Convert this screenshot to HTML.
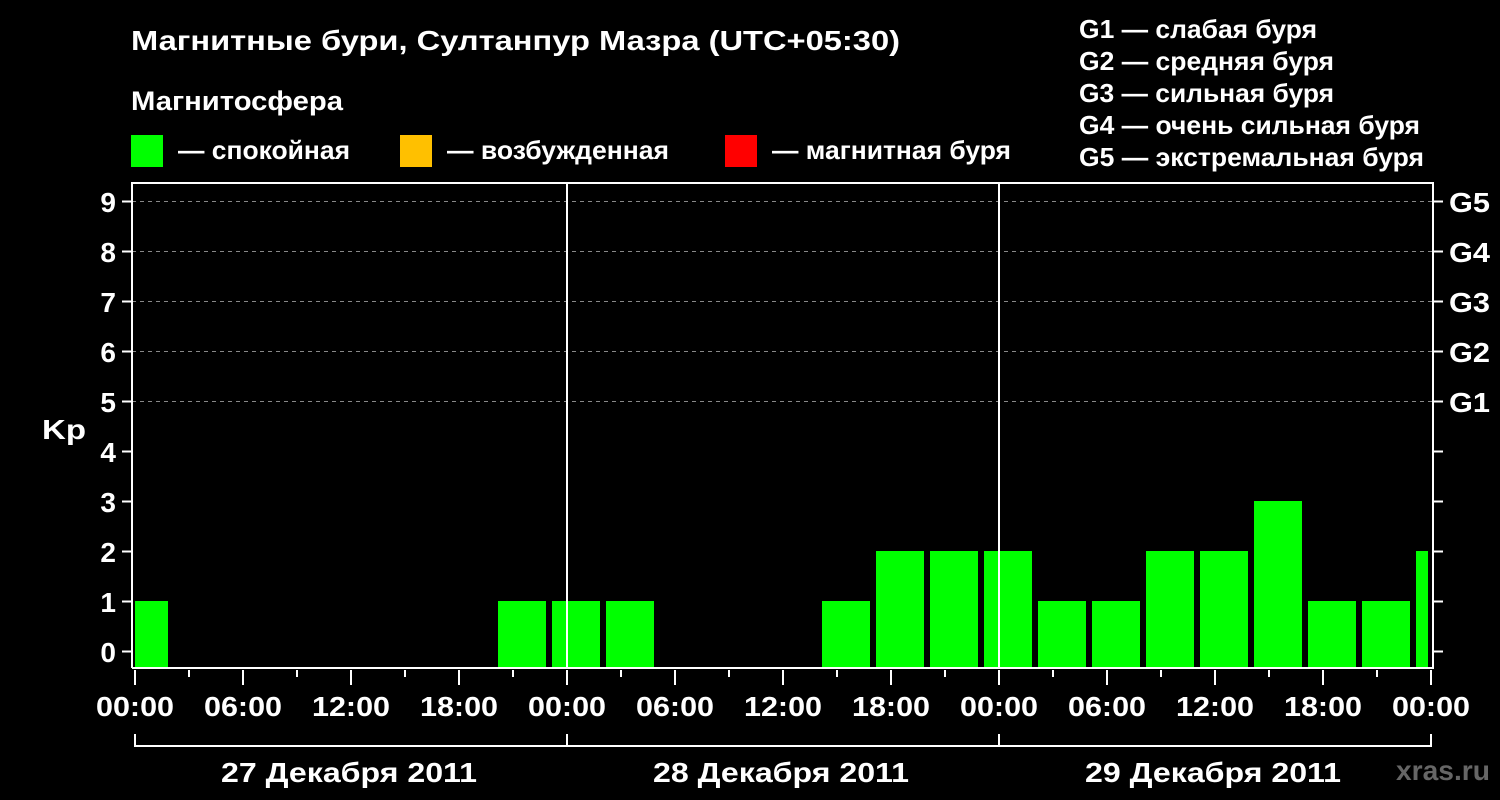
<!DOCTYPE html>
<html><head><meta charset="utf-8"><style>
html,body{margin:0;padding:0;background:#000;}
svg{display:block;font-family:"Liberation Sans",sans-serif;font-weight:bold;}
</style></head><body>
<svg width="1500" height="800" viewBox="0 0 1500 800" xmlns="http://www.w3.org/2000/svg">
<rect width="1500" height="800" fill="#000"/>
<g fill="#fff" lengthAdjust="spacingAndGlyphs">
<text x="131" y="50" font-size="28" textLength="769" lengthAdjust="spacingAndGlyphs">Магнитные бури, Султанпур Мазра (UTC+05:30)</text>
<text x="131" y="110" font-size="27" textLength="212" lengthAdjust="spacingAndGlyphs">Магнитосфера</text>
<text x="178" y="159" font-size="26" textLength="172" lengthAdjust="spacingAndGlyphs">— спокойная</text>
<text x="447" y="159" font-size="26" textLength="222" lengthAdjust="spacingAndGlyphs">— возбужденная</text>
<text x="772" y="159" font-size="26" textLength="239" lengthAdjust="spacingAndGlyphs">— магнитная буря</text>
<text x="1079" y="38" font-size="26" textLength="238" lengthAdjust="spacingAndGlyphs">G1 — слабая буря</text>
<text x="1079" y="70" font-size="26" textLength="255" lengthAdjust="spacingAndGlyphs">G2 — средняя буря</text>
<text x="1079" y="102" font-size="26" textLength="255" lengthAdjust="spacingAndGlyphs">G3 — сильная буря</text>
<text x="1079" y="134" font-size="26" textLength="341" lengthAdjust="spacingAndGlyphs">G4 — очень сильная буря</text>
<text x="1079" y="166" font-size="26" textLength="345" lengthAdjust="spacingAndGlyphs">G5 — экстремальная буря</text>
</g>
<rect x="131" y="135" width="32" height="32" fill="#00ff00"/>
<rect x="400" y="135" width="32" height="32" fill="#ffc000"/>
<rect x="725" y="135" width="32" height="32" fill="#ff0000"/>
<g stroke="#888" stroke-width="1" stroke-dasharray="4,4">
<line x1="132" y1="201.5" x2="1433" y2="201.5"/>
<line x1="132" y1="251.5" x2="1433" y2="251.5"/>
<line x1="132" y1="301.5" x2="1433" y2="301.5"/>
<line x1="132" y1="351.5" x2="1433" y2="351.5"/>
<line x1="132" y1="401.5" x2="1433" y2="401.5"/>
</g>
<g fill="#00ff00">
<rect x="135" y="601" width="33" height="67"/>
<rect x="498" y="601" width="48" height="67"/>
<rect x="552" y="601" width="48" height="67"/>
<rect x="606" y="601" width="48" height="67"/>
<rect x="822" y="601" width="48" height="67"/>
<rect x="876" y="551" width="48" height="117"/>
<rect x="930" y="551" width="48" height="117"/>
<rect x="984" y="551" width="48" height="117"/>
<rect x="1038" y="601" width="48" height="67"/>
<rect x="1092" y="601" width="48" height="67"/>
<rect x="1146" y="551" width="48" height="117"/>
<rect x="1200" y="551" width="48" height="117"/>
<rect x="1254" y="501" width="48" height="167"/>
<rect x="1308" y="601" width="48" height="67"/>
<rect x="1362" y="601" width="48" height="67"/>
<rect x="1416" y="551" width="12" height="117"/>
</g>
<g stroke="#fff" stroke-width="2" fill="none">
<polyline points="132,668 132,183 1433,183 1433,668 132,668"/>
<line x1="567" y1="183" x2="567" y2="668"/>
<line x1="999" y1="183" x2="999" y2="668"/>
<polyline points="135,734 135,746 1431,746 1431,734"/>
<line x1="567" y1="734" x2="567" y2="746"/>
<line x1="999" y1="734" x2="999" y2="746"/>
</g>
<g stroke="#fff" stroke-width="2">
<line x1="122" y1="201.5" x2="132" y2="201.5"/><line x1="1433" y1="201.5" x2="1443" y2="201.5"/>
<line x1="122" y1="251.5" x2="132" y2="251.5"/><line x1="1433" y1="251.5" x2="1443" y2="251.5"/>
<line x1="122" y1="301.5" x2="132" y2="301.5"/><line x1="1433" y1="301.5" x2="1443" y2="301.5"/>
<line x1="122" y1="351.5" x2="132" y2="351.5"/><line x1="1433" y1="351.5" x2="1443" y2="351.5"/>
<line x1="122" y1="401.5" x2="132" y2="401.5"/><line x1="1433" y1="401.5" x2="1443" y2="401.5"/>
<line x1="122" y1="451.5" x2="132" y2="451.5"/><line x1="1433" y1="451.5" x2="1443" y2="451.5"/>
<line x1="122" y1="501.5" x2="132" y2="501.5"/><line x1="1433" y1="501.5" x2="1443" y2="501.5"/>
<line x1="122" y1="551.5" x2="132" y2="551.5"/><line x1="1433" y1="551.5" x2="1443" y2="551.5"/>
<line x1="122" y1="601.5" x2="132" y2="601.5"/><line x1="1433" y1="601.5" x2="1443" y2="601.5"/>
<line x1="122" y1="651.5" x2="132" y2="651.5"/><line x1="1433" y1="651.5" x2="1443" y2="651.5"/>
</g>
<g stroke="#fff" stroke-width="2">
<line x1="135" y1="670" x2="135" y2="685"/><line x1="189" y1="670" x2="189" y2="677"/>
<line x1="243" y1="670" x2="243" y2="685"/><line x1="297" y1="670" x2="297" y2="677"/>
<line x1="351" y1="670" x2="351" y2="685"/><line x1="405" y1="670" x2="405" y2="677"/>
<line x1="459" y1="670" x2="459" y2="685"/><line x1="513" y1="670" x2="513" y2="677"/>
<line x1="567" y1="670" x2="567" y2="685"/><line x1="621" y1="670" x2="621" y2="677"/>
<line x1="675" y1="670" x2="675" y2="685"/><line x1="729" y1="670" x2="729" y2="677"/>
<line x1="783" y1="670" x2="783" y2="685"/><line x1="837" y1="670" x2="837" y2="677"/>
<line x1="891" y1="670" x2="891" y2="685"/><line x1="945" y1="670" x2="945" y2="677"/>
<line x1="999" y1="670" x2="999" y2="685"/><line x1="1053" y1="670" x2="1053" y2="677"/>
<line x1="1107" y1="670" x2="1107" y2="685"/><line x1="1161" y1="670" x2="1161" y2="677"/>
<line x1="1215" y1="670" x2="1215" y2="685"/><line x1="1269" y1="670" x2="1269" y2="677"/>
<line x1="1323" y1="670" x2="1323" y2="685"/><line x1="1377" y1="670" x2="1377" y2="677"/>
<line x1="1431" y1="670" x2="1431" y2="685"/>
</g>
<g fill="#fff" font-size="28" text-anchor="end">
<text x="116" y="212">9</text><text x="116" y="262">8</text><text x="116" y="312">7</text>
<text x="116" y="362">6</text><text x="116" y="412">5</text><text x="116" y="462">4</text>
<text x="116" y="512">3</text><text x="116" y="562">2</text><text x="116" y="612">1</text>
<text x="116" y="662">0</text>
</g>
<text x="42" y="439" fill="#fff" font-size="28" textLength="44" lengthAdjust="spacingAndGlyphs">Kp</text>
<g fill="#fff" font-size="28">
<text x="1449" y="212" textLength="41" lengthAdjust="spacingAndGlyphs">G5</text>
<text x="1449" y="262" textLength="41" lengthAdjust="spacingAndGlyphs">G4</text>
<text x="1449" y="312" textLength="41" lengthAdjust="spacingAndGlyphs">G3</text>
<text x="1449" y="362" textLength="41" lengthAdjust="spacingAndGlyphs">G2</text>
<text x="1449" y="412" textLength="41" lengthAdjust="spacingAndGlyphs">G1</text>
</g>
<g fill="#fff" font-size="28">
<text x="96" y="716" textLength="78" lengthAdjust="spacingAndGlyphs">00:00</text>
<text x="204" y="716" textLength="78" lengthAdjust="spacingAndGlyphs">06:00</text>
<text x="312" y="716" textLength="78" lengthAdjust="spacingAndGlyphs">12:00</text>
<text x="420" y="716" textLength="78" lengthAdjust="spacingAndGlyphs">18:00</text>
<text x="528" y="716" textLength="78" lengthAdjust="spacingAndGlyphs">00:00</text>
<text x="636" y="716" textLength="78" lengthAdjust="spacingAndGlyphs">06:00</text>
<text x="744" y="716" textLength="78" lengthAdjust="spacingAndGlyphs">12:00</text>
<text x="852" y="716" textLength="78" lengthAdjust="spacingAndGlyphs">18:00</text>
<text x="960" y="716" textLength="78" lengthAdjust="spacingAndGlyphs">00:00</text>
<text x="1068" y="716" textLength="78" lengthAdjust="spacingAndGlyphs">06:00</text>
<text x="1176" y="716" textLength="78" lengthAdjust="spacingAndGlyphs">12:00</text>
<text x="1284" y="716" textLength="78" lengthAdjust="spacingAndGlyphs">18:00</text>
<text x="1392" y="716" textLength="78" lengthAdjust="spacingAndGlyphs">00:00</text>
<text x="221" y="782" textLength="256" lengthAdjust="spacingAndGlyphs">27 Декабря 2011</text>
<text x="653" y="782" textLength="256" lengthAdjust="spacingAndGlyphs">28 Декабря 2011</text>
<text x="1085" y="782" textLength="256" lengthAdjust="spacingAndGlyphs">29 Декабря 2011</text>
</g>
<text x="1396" y="780" fill="#666" font-size="28" textLength="94" lengthAdjust="spacingAndGlyphs">xras.ru</text>
</svg>
</body></html>
